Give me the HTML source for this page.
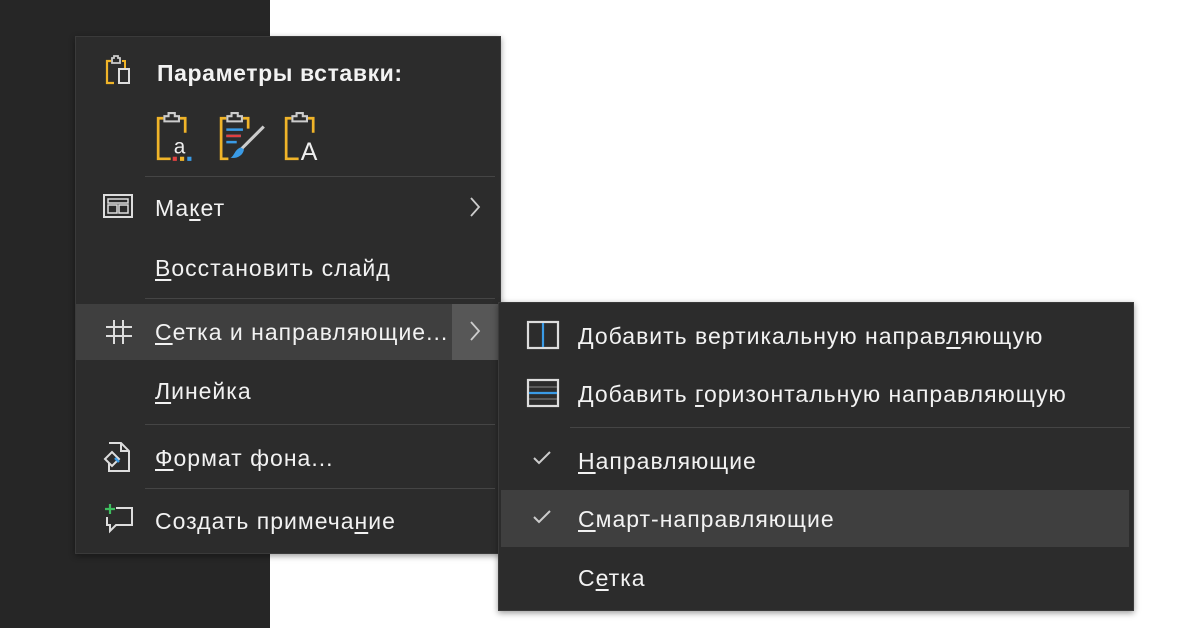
<!DOCTYPE html>
<html><head><meta charset="utf-8"><style>
body{margin:0;width:1200px;height:628px;background:#fff;position:relative;overflow:hidden;font-family:"Liberation Sans","DejaVu Sans",sans-serif;}
.left{position:absolute;left:0;top:0;width:270px;height:628px;background:#262626;}
.menu{position:absolute;background:#2c2c2c;border:1px solid #3a3a3a;box-shadow:0 2px 6px rgba(0,0,0,.4);}
.t{position:absolute;color:#f2f2f2;font-size:23px;letter-spacing:1px;white-space:nowrap;line-height:26px;}
.sep{position:absolute;height:1px;background:#454545;}
.hl{position:absolute;background:#3f3f3f;}
u{text-decoration:underline;text-underline-offset:3px;}
svg{position:absolute;}
</style></head><body>
<div class="left"></div>
<div class="menu" style="left:75px;top:36px;width:424px;height:516px;"></div>
<div class="hl" style="left:76px;top:304px;width:423px;height:56px;"></div>
<div class="hl" style="left:452px;top:304px;width:46px;height:56px;background:#575757;"></div>
<div class="menu" style="left:498px;top:302px;width:634px;height:307px;"></div>
<div class="hl" style="left:501px;top:490px;width:628px;height:57px;"></div>

<svg style="left:104px;top:55px" width="34" height="32" viewBox="0 0 34 32"><path d="M7 6H3V28H10" fill="none" stroke="#f0b429" stroke-width="2.2"/><path d="M8 8V3h2V1h4v2h2v5z" fill="none" stroke="#ccc" stroke-width="1.8"/><path d="M18 6h3v7" fill="none" stroke="#f0b429" stroke-width="2"/><rect x="15" y="14" width="10" height="14" fill="none" stroke="#ddd" stroke-width="2"/></svg>
<div class="t" style="left:157px;top:60px;font-weight:bold;letter-spacing:0.6px;">Параметры вставки:</div>
<svg style="left:155px;top:112px" width="50" height="52" viewBox="0 0 48 50"><path d="M8 6H3V45H15M24 6h5v14" fill="none" stroke="#f0b429" stroke-width="2.6"/><path d="M9 9V4h4V1h6v3h4v5z" fill="none" stroke="#ccc" stroke-width="2"/><text x="18" y="40" fill="#eee" font-size="20" font-family="Liberation Sans">a</text><rect x="17" y="43" width="4" height="4" fill="#e04040"/><rect x="24" y="43" width="4" height="4" fill="#f0b429"/><rect x="31" y="43" width="4" height="4" fill="#3a9be6"/></svg>
<svg style="left:218px;top:112px" width="52" height="52" viewBox="0 0 50 50"><path d="M8 6H3V45H10M24 6h5v10" fill="none" stroke="#f0b429" stroke-width="2.6"/><path d="M9 9V4h4V1h6v3h4v5z" fill="none" stroke="#ccc" stroke-width="2"/><path d="M8 17h16M8 23h14M8 29h10" stroke="#3a9be6" stroke-width="2.4"/><path d="M8 23h14" stroke="#e04040" stroke-width="2.4"/><path d="M44 14L22 36" stroke="#ccc" stroke-width="3"/><path d="M22 34c-6 2-6 8-10 10 6 1 12-2 13-8z" fill="#3a9be6"/></svg>
<svg style="left:283px;top:112px" width="50" height="52" viewBox="0 0 48 50"><path d="M8 6H3V45H15M24 6h5v14" fill="none" stroke="#f0b429" stroke-width="2.6"/><path d="M9 9V4h4V1h6v3h4v5z" fill="none" stroke="#ccc" stroke-width="2"/><text x="17" y="46" fill="#eee" font-size="24" font-family="Liberation Sans">A</text></svg>
<div class="sep" style="left:145px;top:176px;width:350px;"></div>

<svg style="left:102px;top:193px" width="32" height="26" viewBox="0 0 32 26"><rect x="2" y="2" width="28" height="22" fill="none" stroke="#ddd" stroke-width="2"/><rect x="6" y="6" width="20" height="4" fill="none" stroke="#ddd" stroke-width="1.5"/><rect x="6" y="12" width="9" height="8" fill="none" stroke="#ddd" stroke-width="1.5"/><rect x="17" y="12" width="9" height="8" fill="none" stroke="#ddd" stroke-width="1.5"/></svg>
<div class="t" style="left:155px;top:195px;">Ма<u>к</u>ет</div>
<svg style="left:468px;top:196px" width="14" height="22" viewBox="0 0 14 22"><path d="M3 2l8 9-8 9" fill="none" stroke="#ccc" stroke-width="1.8"/></svg>
<div class="t" style="left:155px;top:255px;"><u>В</u>осстановить слайд</div>
<div class="sep" style="left:145px;top:298px;width:350px;"></div>

<svg style="left:104px;top:318px" width="30" height="28" viewBox="0 0 30 28"><path d="M10 2v24M19 2v24M2 9h26M2 18h26" stroke="#ddd" stroke-width="2"/></svg>
<div class="t" style="left:155px;top:319px;"><u>С</u>етка и направляющие...</div>
<svg style="left:468px;top:320px" width="14" height="22" viewBox="0 0 14 22"><path d="M3 2l8 9-8 9" fill="none" stroke="#ccc" stroke-width="1.8"/></svg>
<div class="t" style="left:155px;top:378px;"><u>Л</u>инейка</div>
<div class="sep" style="left:145px;top:424px;width:350px;"></div>

<svg style="left:103px;top:441px" width="30" height="32" viewBox="0 0 30 32"><path d="M6 2h12l8 8v20H6v-8M18 2v8h8" fill="none" stroke="#ddd" stroke-width="2"/><path d="M2 18l7-7 7 7-7 7z" fill="none" stroke="#ddd" stroke-width="2"/><path d="M12 17l4 4" stroke="#3a9be6" stroke-width="2.5"/></svg>
<div class="t" style="left:155px;top:445px;"><u>Ф</u>ормат фона...</div>
<div class="sep" style="left:145px;top:488px;width:350px;"></div>

<svg style="left:102px;top:503px" width="34" height="34" viewBox="0 0 34 34"><path d="M8 1v10M3 6h10" stroke="#3fbf5f" stroke-width="2.2"/><path d="M14 5h16v17H14l-6 6v-6H5v-8" fill="none" stroke="#ddd" stroke-width="2"/></svg>
<div class="t" style="left:155px;top:508px;">Создать примеча<u>н</u>ие</div>

<svg style="left:526px;top:320px" width="34" height="30" viewBox="0 0 34 30"><rect x="2" y="2" width="30" height="26" fill="none" stroke="#ddd" stroke-width="2.2"/><path d="M17 3v24" stroke="#3a9be6" stroke-width="2.2"/></svg>
<div class="t" style="left:578px;top:323px;">Добавить вертикальную направ<u>л</u>яющую</div>
<svg style="left:526px;top:378px" width="34" height="30" viewBox="0 0 34 30"><rect x="2" y="2" width="30" height="26" fill="none" stroke="#ddd" stroke-width="2.2"/><path d="M3 15h28" stroke="#3a9be6" stroke-width="2.2"/><path d="M3 9h28M3 21h28" stroke="#888" stroke-width="1"/></svg>
<div class="t" style="left:578px;top:381px;">Добавить <u>г</u>оризонтальную направляющую</div>
<div class="sep" style="left:570px;top:427px;width:560px;"></div>
<svg style="left:532px;top:450px" width="20" height="16" viewBox="0 0 20 16"><path d="M2 8l5 5L18 2" fill="none" stroke="#ccc" stroke-width="2"/></svg>
<div class="t" style="left:578px;top:448px;"><u>Н</u>аправляющие</div>
<svg style="left:532px;top:509px" width="20" height="16" viewBox="0 0 20 16"><path d="M2 8l5 5L18 2" fill="none" stroke="#ccc" stroke-width="2"/></svg>
<div class="t" style="left:578px;top:506px;"><u>С</u>март-направляющие</div>
<div class="t" style="left:578px;top:565px;">С<u>е</u>тка</div>
</body></html>
